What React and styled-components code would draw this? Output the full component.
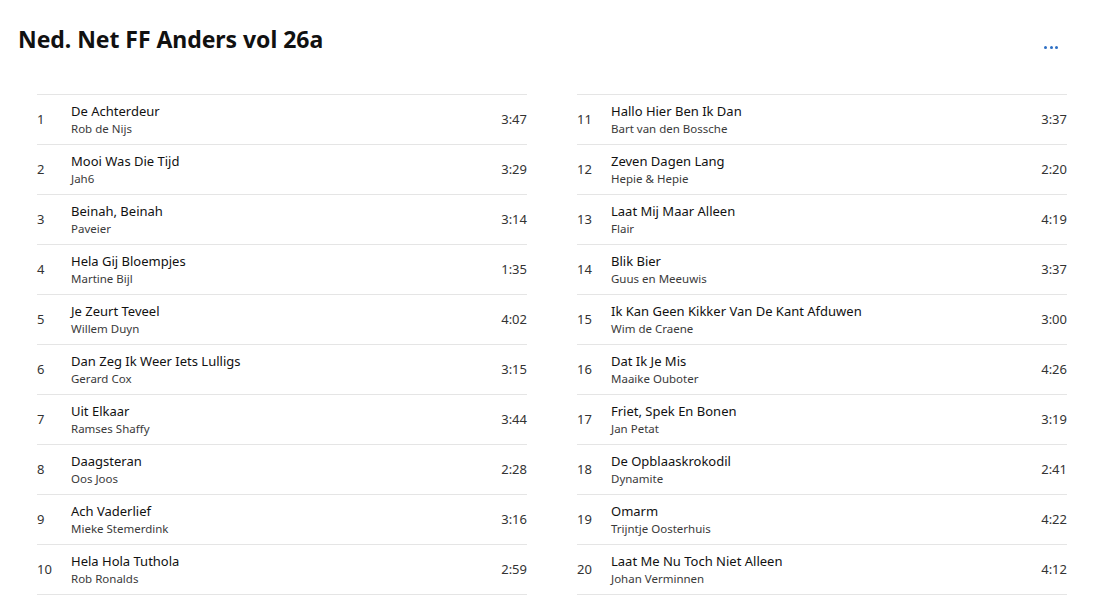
import React from "react";
import styled, { createGlobalStyle } from "styled-components";

const Global = createGlobalStyle`
  html, body { margin: 0; padding: 0; background: #fff; }
  body { font-family: "Segoe UI", "Noto Sans", "Open Sans", sans-serif; color: #1a1a1a; }
`;

const Page = styled.div`
  width: 1097px;
  height: 600px;
  overflow: hidden;
  box-sizing: border-box;
  padding: 0 30px 0 18px;
`;

const Header = styled.header`
  display: flex;
  justify-content: space-between;
  align-items: flex-start;
  height: 94px;
`;

const Title = styled.h1`
  margin: 0;
  padding-top: 23px;
  font-size: 23px;
  font-weight: 700;
  line-height: 32px;
  color: #111;
  letter-spacing: -0.05px;
`;

const MoreButton = styled.button`
  margin-top: 46px;
  margin-right: 9px;
  border: 0;
  background: none;
  padding: 0;
  display: flex;
  gap: 2.5px;
  cursor: pointer;
`;

const Dot = styled.span`
  width: 3px;
  height: 3px;
  border-radius: 50%;
  background: #2d6fc4;
`;

const Columns = styled.div`
  display: grid;
  grid-template-columns: 490px 490px;
  column-gap: 50px;
  padding-left: 19px;
`;

const List = styled.ol`
  list-style: none;
  margin: 0;
  padding: 0;
  border-bottom: 1px solid #e5e5e5;
`;

const Row = styled.li`
  display: flex;
  align-items: center;
  height: 49px;
  border-top: 1px solid #e5e5e5;
`;

const Num = styled.span`
  width: 34px;
  flex: none;
  font-size: 13px;
  color: #333;
  margin-bottom: 2px;
`;

const Info = styled.div`
  flex: 1;
  display: flex;
  flex-direction: column;
  min-width: 0;
`;

const SongTitle = styled.span`
  font-size: 13px;
  line-height: 17px;
  color: #111;
`;

const Artist = styled.span`
  font-size: 11.5px;
  line-height: 17px;
  color: #3a3a3a;
`;

const Duration = styled.span`
  font-size: 13px;
  color: #333;
  margin-bottom: 2px;
`;

const left = [
  ["De Achterdeur", "Rob de Nijs", "3:47"],
  ["Mooi Was Die Tijd", "Jah6", "3:29"],
  ["Beinah, Beinah", "Paveier", "3:14"],
  ["Hela Gij Bloempjes", "Martine Bijl", "1:35"],
  ["Je Zeurt Teveel", "Willem Duyn", "4:02"],
  ["Dan Zeg Ik Weer Iets Lulligs", "Gerard Cox", "3:15"],
  ["Uit Elkaar", "Ramses Shaffy", "3:44"],
  ["Daagsteran", "Oos Joos", "2:28"],
  ["Ach Vaderlief", "Mieke Stemerdink", "3:16"],
  ["Hela Hola Tuthola", "Rob Ronalds", "2:59"],
];

const right = [
  ["Hallo Hier Ben Ik Dan", "Bart van den Bossche", "3:37"],
  ["Zeven Dagen Lang", "Hepie & Hepie", "2:20"],
  ["Laat Mij Maar Alleen", "Flair", "4:19"],
  ["Blik Bier", "Guus en Meeuwis", "3:37"],
  ["Ik Kan Geen Kikker Van De Kant Afduwen", "Wim de Craene", "3:00"],
  ["Dat Ik Je Mis", "Maaike Ouboter", "4:26"],
  ["Friet, Spek En Bonen", "Jan Petat", "3:19"],
  ["De Opblaaskrokodil", "Dynamite", "2:41"],
  ["Omarm", "Trijntje Oosterhuis", "4:22"],
  ["Laat Me Nu Toch Niet Alleen", "Johan Verminnen", "4:12"],
];

function TrackList({ tracks, start }) {
  return (
    <List>
      {tracks.map(([t, a, d], i) => (
        <Row key={t}>
          <Num>{start + i}</Num>
          <Info>
            <SongTitle>{t}</SongTitle>
            <Artist>{a}</Artist>
          </Info>
          <Duration>{d}</Duration>
        </Row>
      ))}
    </List>
  );
}

export default function App() {
  return (
    <>
      <Global />
      <Page>
        <Header>
          <Title>Ned. Net FF Anders vol 26a</Title>
          <MoreButton aria-label="Meer">
            <Dot />
            <Dot />
            <Dot />
          </MoreButton>
        </Header>
        <Columns>
          <TrackList tracks={left} start={1} />
          <TrackList tracks={right} start={11} />
        </Columns>
      </Page>
    </>
  );
}
